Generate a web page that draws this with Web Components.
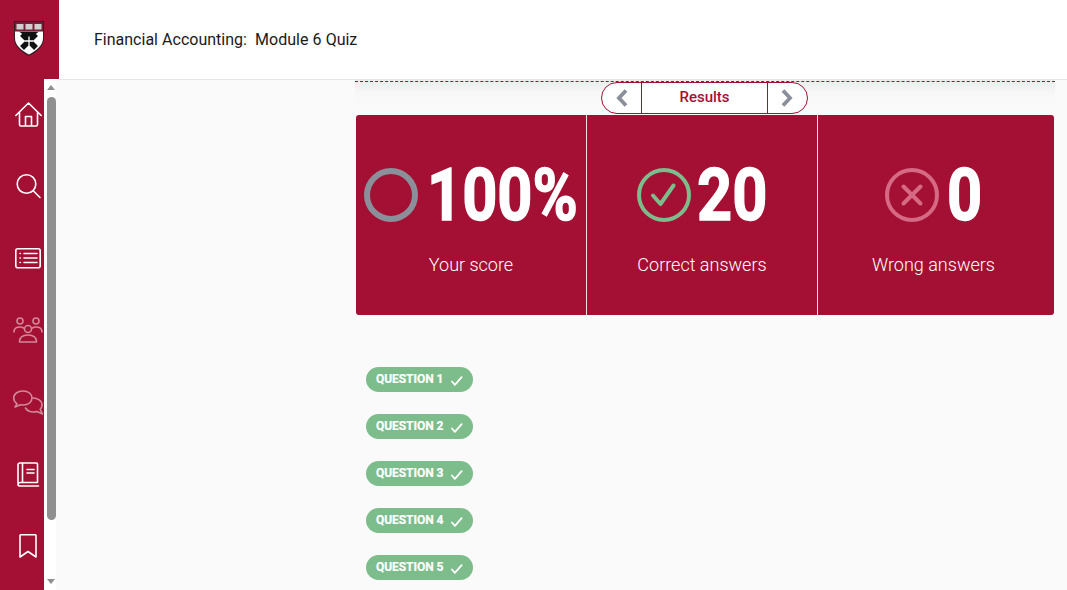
<!DOCTYPE html>
<html>
<head>
<meta charset="utf-8">
<title>Module 6 Quiz</title>
<style>
html, body { margin: 0; height: 100%; overflow: hidden; background: #fff; }
body { font-family: Roboto, "Liberation Sans", sans-serif; }
</style>
</head>
<body>
<quiz-app>
    <side-nav slot="nav"></side-nav>
    <top-bar slot="top">Financial Accounting:&nbsp; Module 6 Quiz</top-bar>
    <results-pager>Results</results-pager>
    <score-panel>
        <score-card value="100%" label="Your score" kind="score" gap="9"></score-card>
        <score-card value="20" label="Correct answers" kind="right" gap="6"></score-card>
        <score-card value="0" label="Wrong answers" kind="wrong" gap="8"></score-card>
    </score-panel>
    <question-list>
        <question-pill>QUESTION 1</question-pill>
        <question-pill>QUESTION 2</question-pill>
        <question-pill>QUESTION 3</question-pill>
        <question-pill>QUESTION 4</question-pill>
        <question-pill>QUESTION 5</question-pill>
    </question-list>
</quiz-app>

<script>
class QuizApp extends HTMLElement {
    constructor() {
        super();
        this.attachShadow({ mode: 'open' });
        this.shadowRoot.innerHTML = `
            <style>
                :host {
                    display: grid;
                    grid-template-columns: 59px 1fr;
                    grid-template-rows: 80px 510px;
                    height: 590px;
                    overflow: hidden;
                }
                .nav { grid-row: 1 / 3; }
                .top { grid-column: 2; }
                .main {
                    grid-column: 2;
                    background: #fafafa;
                    padding-left: 296px;
                    overflow: hidden;
                }
                .column {
                    width: 700px;
                    height: 510px;
                    box-sizing: border-box;
                    padding-top: 1px;
                    background: linear-gradient(#ececec 0, #f8f8f8 14px, #fafafa 30px);
                }
            </style>
            <div class="nav"><slot name="nav"></slot></div>
            <div class="top"><slot name="top"></slot></div>
            <div class="main"><div class="column"><slot></slot></div></div>
        `;
    }
}

class SideNav extends HTMLElement {
    constructor() {
        super();
        this.attachShadow({ mode: 'open' });
        this.shadowRoot.innerHTML = `
            <style>
                :host {
                    display: grid;
                    grid-template-columns: 44px 15px;
                    grid-template-rows: 79px 511px;
                    background: #a31033;
                    height: 590px;
                }
                .brand {
                    grid-column: 1 / 3;
                    display: flex;
                    align-items: flex-start;
                    padding: 21px 0 0 14px;
                }
                .icons {
                    display: flex;
                    flex-direction: column;
                    align-items: center;
                    margin-top: -1px;
                }
                .icons a { display: flex; justify-content: center; align-items: center; height: 72px; width: 44px; flex: none; }
                .icons a svg { fill: none; stroke: #fff; stroke-width: 1.6; stroke-linecap: round; stroke-linejoin: round; overflow: visible; margin-left: 12px; }
                .dim { opacity: .5; }
                .track {
                    background: linear-gradient(90deg, #fff 12px, #fafafa 12px);
                    display: flex;
                    flex-direction: column;
                    padding-left: 3px;
                }
                .thumb {
                    width: 9px;
                    height: 423px;
                    margin-top: 7px;
                    background: #8f8f8f;
                    border-radius: 5px;
                }
                .up, .down { width: 0; height: 0; border-left: 4.5px solid transparent; border-right: 4.5px solid transparent; }
                .up { border-bottom: 5px solid #8f8f8f; margin-top: 6px; }
                .down { border-top: 5px solid #8f8f8f; margin-top: 59px; }
            </style>
            <div class="brand">
                <svg width="30" height="36" viewBox="0 0 30 36">
                    <defs><clipPath id="body"><path d="M1 10.500h28V17c0 7.500-6.500 12.500-14 16.500C7.500 29.500 1 24.500 1 17z"/></clipPath></defs>
                    <path d="M0 0h30v17c0 8-7 14-15 18C7 31 0 25 0 17z" fill="#3a1a22"/>
                    <rect x="1" y="1" width="28" height="9.500" fill="#7a1c35"/>
                    <path d="M2.500 3h7v5.500h-7zM11.500 3h7v5.500h-7zM20.500 3h7v5.500h-7z" fill="#cfcfcf"/>
                    <g clip-path="url(#body)">
                        <rect x="0" y="10" width="30" height="26" fill="#fff"/>
                        <path d="M5 10.500h20L15 18z" fill="#111"/>
                        <path d="m8 13 14 14M22 13 8 27" stroke="#111" stroke-width="5.500"/>
                        <path d="M15 15.500v9M10.500 20h9" stroke="#fff" stroke-width="1.300"/>
                    </g>
                </svg>
            </div>
            <div class="icons">
                <a><svg width="27" height="25" viewBox="0 0 27 25"><path d="M.8 13.500 13.500 1l12.700 12.500M4.500 10.500V22.500a1.500 1.500 0 0 0 1.500 1.500h15a1.500 1.500 0 0 0 1.500-1.500V10.500M10.500 24V14.500h6V24"/></svg></a>
                <a><svg width="25" height="24" viewBox="0 0 25 24"><circle cx="10.500" cy="10" r="9.300"/><path d="m17.500 17 6.500 6.500"/></svg></a>
                <a><svg width="26" height="21" viewBox="0 0 26 21"><rect x=".8" y=".8" width="24.400" height="19" rx="2"/><path d="M9 5.500h13M9 10h13M9 14.500h13M5 5.500h.4M5 10h.4M5 14.500h.4"/></svg></a>
                <a class="dim"><svg width="30" height="26" viewBox="0 0 30 26"><circle cx="7" cy="4" r="3"/><circle cx="23" cy="4" r="3"/><circle cx="15" cy="12" r="3.500"/><path d="M1 15c0-3 2-5 6-5 1.500 0 2.500.3 3.500 1M29 15c0-3-2-5-6-5-1.500 0-2.500.3-3.500 1M6.500 25c0-5 3-7 8.500-7s8.500 2 8.500 7z"/></svg></a>
                <a class="dim"><svg width="30" height="24" viewBox="0 0 30 24"><path d="M10 1C4.500 1 .7 4 .7 8c0 2.500 1.500 4.500 3.300 5.800L2 17l5.500-2.300c.8.200 1.600.3 2.500.3 5.500 0 9-3 9-7s-3.500-7-9-7z"/><path d="M20 8c4.500 0 9 2.500 9 7 0 1.800-.7 3.200-1.800 4.300L29.500 24 24 21.500c-1 .3-2.200.5-3.500.5-3.500 0-6.500-1.500-8-4"/></svg></a>
                <a><svg width="22" height="25" viewBox="0 0 22 25"><path d="M1 21V3a2 2 0 0 1 2-2h16.500a1 1 0 0 1 1 1v18.500H3.500C2 20.500 1 21.500 1 22.500S2 24 3.500 24h18"/><path d="M5.500 1v19M10 7.500h7M10 11h7"/></svg></a>
                <a><svg width="18" height="24" viewBox="0 0 18 24"><path d="M1 1.500A1 1 0 0 1 2 .8h14a1 1 0 0 1 1 .7V23l-8-5.500L1 23z"/></svg></a>
            </div>
            <div class="track">
                <span class="up"></span>
                <span class="thumb"></span>
                <span class="down"></span>
            </div>
        `;
    }
}

class TopBar extends HTMLElement {
    constructor() {
        super();
        this.attachShadow({ mode: 'open' });
        this.shadowRoot.innerHTML = `
            <style>
                :host {
                    display: flex;
                    align-items: center;
                    box-sizing: border-box;
                    height: 80px;
                    padding: 0 0 0 35px;
                    background: #fff;
                    border-bottom: 1px solid #e8e8e8;
                    color: #1a1a1a;
                    font: 400 16px Roboto, sans-serif;
                    word-spacing: .15px;
                }
            </style>
            <slot></slot>
        `;
    }
}

class ResultsPager extends HTMLElement {
    constructor() {
        super();
        this.attachShadow({ mode: 'open' });
        this.shadowRoot.innerHTML = `
            <style>
                :host {
                    display: block;
                    height: 34px;
                    border-top: 1px dashed #a31033;
                    box-sizing: border-box;
                }
                .pager {
                    display: grid;
                    grid-template-columns: 39px 127px 39px;
                    width: 207px;
                    height: 32px;
                    box-sizing: border-box;
                    margin: 0 0 0 246px;
                    background: #fff;
                    border: 1px solid #a31033;
                    border-radius: 16px;
                    color: #a31033;
                    font: 500 15px Roboto, sans-serif;
                }
                .label {
                    display: flex;
                    align-items: center;
                    justify-content: center;
                    padding-bottom: 2px;
                    border-left: 1px solid #a31033;
                    border-right: 1px solid #a31033;
                }
                .arrow { display: flex; align-items: center; justify-content: center; }
                svg { fill: none; stroke: #8b8f9a; stroke-width: 3.800; }
            </style>
            <div class="pager">
                <span class="arrow"><svg width="13" height="18" viewBox="0 0 13 18"><path d="M11 1.500 4 9l7 7.500"/></svg></span>
                <span class="label"><slot></slot></span>
                <span class="arrow"><svg width="13" height="18" viewBox="0 0 13 18"><path d="m2 1.500 7 7.500-7 7.500"/></svg></span>
            </div>
        `;
    }
}

class ScorePanel extends HTMLElement {
    constructor() {
        super();
        this.attachShadow({ mode: 'open' });
        this.shadowRoot.innerHTML = `
            <style>
                :host {
                    display: grid;
                    grid-template-columns: repeat(3, 231px);
                    width: 698px;
                    height: 200px;
                    margin-left: 1px;
                    background: #a31033;
                    border-radius: 3px;
                    overflow: hidden;
                }
            </style>
            <slot></slot>
        `;
    }
}

const SCORE_ICONS = {
    score: '<circle cx="27" cy="27" r="24" fill="none" stroke="#8b8f9a" stroke-width="6"/>',
    right: '<circle cx="27" cy="27" r="25" fill="none" stroke="#7dbd8c" stroke-width="4"/><path d="M16 27.500 23.500 36 36.500 17.500" fill="none" stroke="#7dbd8c" stroke-width="4" stroke-linecap="round" stroke-linejoin="round"/>',
    wrong: '<circle cx="27" cy="27" r="25" fill="none" stroke="#d66a84" stroke-width="4"/><path d="m18.500 18.500 17 17M35.500 18.500l-17 17" fill="none" stroke="#d66a84" stroke-width="4" stroke-linecap="round"/>'
};

class ScoreCard extends HTMLElement {
    constructor() {
        super();
        this.attachShadow({ mode: 'open' });
    }

    connectedCallback() {
        const value = this.getAttribute('value');
        const label = this.getAttribute('label');
        const kind = this.getAttribute('kind');
        const gap = this.getAttribute('gap');

        this.shadowRoot.innerHTML = `
            <style>
                :host {
                    display: flex;
                    flex-direction: column;
                    align-items: center;
                    color: #fff;
                    padding-top: 46px;
                    box-sizing: border-box;
                }
                :host(:not(:last-child)) { border-right: 1px solid #f3dfe4; }
                .top { display: flex; align-items: center; justify-content: center; gap: ${gap}px; height: 68px; white-space: nowrap; }
                .num {
                    font: 700 73px/68px Roboto, sans-serif;
                    -webkit-text-stroke: 1.4px #fff;
                    display: inline-block;
                    transform-origin: left center;
                }
                .label { margin-top: 24px; font: 300 18px/24px Roboto, sans-serif; }
            </style>
            <div class="top">
                <svg width="54" height="54" viewBox="0 0 54 54">${SCORE_ICONS[kind]}</svg>
                <span class="num">${value}</span>
            </div>
            <div class="label">${label}</div>
        `;

        // no condensed face is installed, so squeeze the digits to fit
        const num = this.shadowRoot.querySelector('.num');
        const w = num.offsetWidth;
        const sx = 0.84;
        num.style.transform = 'scaleX(' + sx + ')';
        num.style.marginRight = (-(w * (1 - sx))) + 'px';
    }
}

class QuestionList extends HTMLElement {
    constructor() {
        super();
        this.attachShadow({ mode: 'open' });
        this.shadowRoot.innerHTML = `
            <style>
                :host {
                    display: flex;
                    flex-direction: column;
                    align-items: flex-start;
                    gap: 22px;
                    padding: 52px 0 0 11px;
                }
            </style>
            <slot></slot>
        `;
    }
}

class QuestionPill extends HTMLElement {
    constructor() {
        super();
        this.attachShadow({ mode: 'open' });
        this.shadowRoot.innerHTML = `
            <style>
                :host {
                    display: flex;
                    align-items: center;
                    box-sizing: border-box;
                    width: 107px;
                    height: 25px;
                    padding: 0 10px 2px;
                    background: #7dbd8c;
                    border-radius: 13px;
                    color: #fff;
                    font: 700 12px Roboto, sans-serif;
                    letter-spacing: -.05px;
                    -webkit-text-stroke: .2px #fff;
                    white-space: nowrap;
                }
                svg { margin: 4px 0 0 8px; fill: none; stroke: #fff; stroke-width: 1.800; stroke-linecap: round; stroke-linejoin: round; }
            </style>
            <slot></slot>
            <svg width="12" height="10" viewBox="0 0 12 10"><path d="m1 5.500 3 3.500 7-8"/></svg>
        `;
    }
}

customElements.define('quiz-app', QuizApp);
customElements.define('side-nav', SideNav);
customElements.define('top-bar', TopBar);
customElements.define('results-pager', ResultsPager);
customElements.define('score-panel', ScorePanel);
customElements.define('score-card', ScoreCard);
customElements.define('question-list', QuestionList);
customElements.define('question-pill', QuestionPill);
</script>
</body>
</html>
